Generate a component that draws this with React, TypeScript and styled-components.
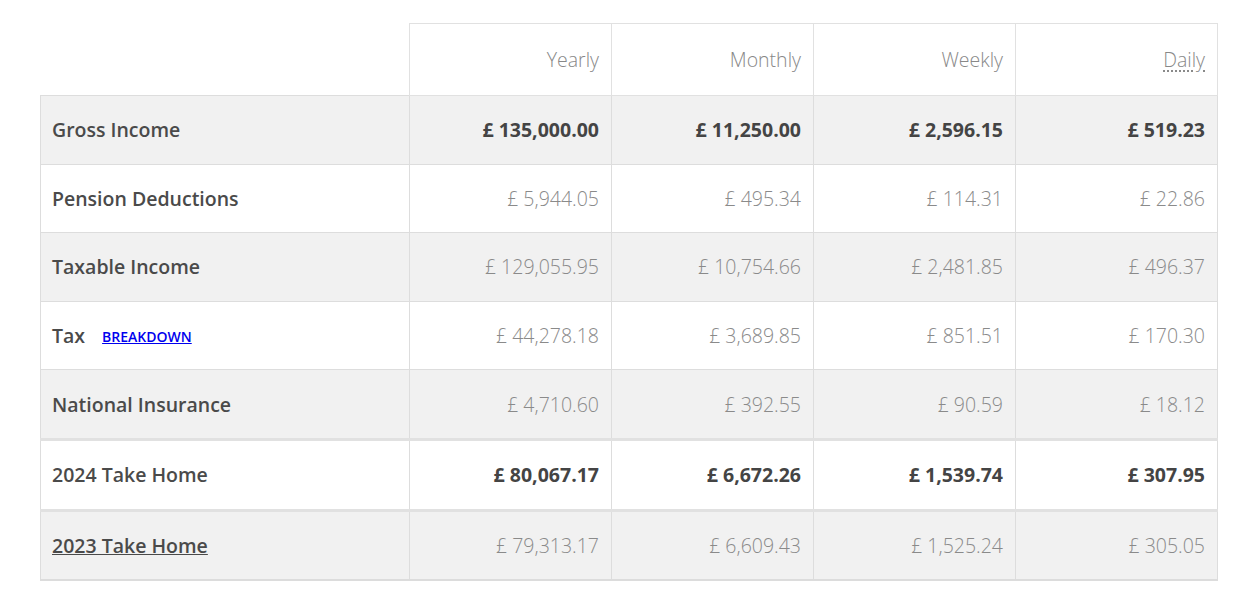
import styled, { createGlobalStyle } from "styled-components";

const GlobalStyle = createGlobalStyle`
  body {
    margin: 0;
    background: #ffffff;
    font-family: "Open Sans", "Liberation Sans", sans-serif;
  }
`;

const Page = styled.div`
  padding: 23px 19px 0 40px;
`;

const Table = styled.table`
  width: 1177px;
  border-collapse: collapse;
  table-layout: fixed;
  font-size: 19.5px;
`;

const HeadCell = styled.th<{ blank?: boolean }>`
  height: 71px;
  padding: 0 12px;
  text-align: right;
  font-weight: 300;
  color: #888;
  border: ${(props) => (props.blank ? "none" : "1px solid #e1e1e1")};
  background: #fff;
`;

const Row = styled.tr<{ shaded?: boolean; divider?: boolean }>`
  background-color: ${(props) => (props.shaded ? "#f1f1f1" : "#fff")};
  border-top: ${(props) => (props.divider ? "3px solid #e1e1e1" : "1px solid #ddd")};

  &:last-child {
    border-bottom: 2px solid #dcdcdc;
  }
`;

const Label = styled.td`
  height: 67.6px;
  padding: 0 12px 0 11px;
  font-weight: 600;
  color: #4a4a4a;
  border: 1px solid #ddd;
  border-top: inherit;
`;

const Value = styled.td<{ strong?: boolean }>`
  padding: 0 12px;
  text-align: right;
  font-weight: ${(props) => (props.strong ? 700 : 300)};
  color: ${(props) => (props.strong ? "#444" : "#8a8a8a")};
  border: 1px solid #ddd;
  border-top: inherit;
`;

const Abbr = styled.abbr`
  text-decoration: underline dotted;
  text-underline-offset: 4px;
  cursor: help;
`;

const Breakdown = styled.a`
  margin-left: 17px;
  font-size: 14px;
  font-weight: 600;
  color: #0000ee;
  text-decoration: underline;
  vertical-align: 1px;
`;

const YearLink = styled.a`
  color: #4a4a4a;
  text-decoration: underline;
`;

const rows = [
  { label: "Gross Income", values: ["£ 135,000.00", "£ 11,250.00", "£ 2,596.15", "£ 519.23"], strong: true },
  { label: "Pension Deductions", values: ["£ 5,944.05", "£ 495.34", "£ 114.31", "£ 22.86"] },
  { label: "Taxable Income", values: ["£ 129,055.95", "£ 10,754.66", "£ 2,481.85", "£ 496.37"] },
  { label: "Tax", values: ["£ 44,278.18", "£ 3,689.85", "£ 851.51", "£ 170.30"], breakdown: true },
  { label: "National Insurance", values: ["£ 4,710.60", "£ 392.55", "£ 90.59", "£ 18.12"] },
  { label: "2024 Take Home", values: ["£ 80,067.17", "£ 6,672.26", "£ 1,539.74", "£ 307.95"], strong: true, divider: true },
  { label: "2023 Take Home", values: ["£ 79,313.17", "£ 6,609.43", "£ 1,525.24", "£ 305.05"], divider: true, link: true },
];

export default function App() {
  return (
    <Page>
      <GlobalStyle />
      <Table>
        <colgroup>
          <col style={{ width: 369 }} />
          <col style={{ width: 202 }} />
          <col style={{ width: 202 }} />
          <col style={{ width: 202 }} />
          <col style={{ width: 202 }} />
        </colgroup>
        <thead>
          <tr>
            <HeadCell blank />
            <HeadCell>Yearly</HeadCell>
            <HeadCell>Monthly</HeadCell>
            <HeadCell>Weekly</HeadCell>
            <HeadCell>
              <Abbr title="Based on a 5 day working week">Daily</Abbr>
            </HeadCell>
          </tr>
        </thead>
        <tbody>
          {rows.map((row, i) => (
            <Row key={row.label} shaded={i % 2 === 0} divider={row.divider}>
              <Label>
                {row.link ? <YearLink href="#">{row.label}</YearLink> : row.label}
                {row.breakdown && <Breakdown href="#">BREAKDOWN</Breakdown>}
              </Label>
              {row.values.map((v) => (
                <Value key={v} strong={row.strong}>
                  {v}
                </Value>
              ))}
            </Row>
          ))}
        </tbody>
      </Table>
    </Page>
  );
}
